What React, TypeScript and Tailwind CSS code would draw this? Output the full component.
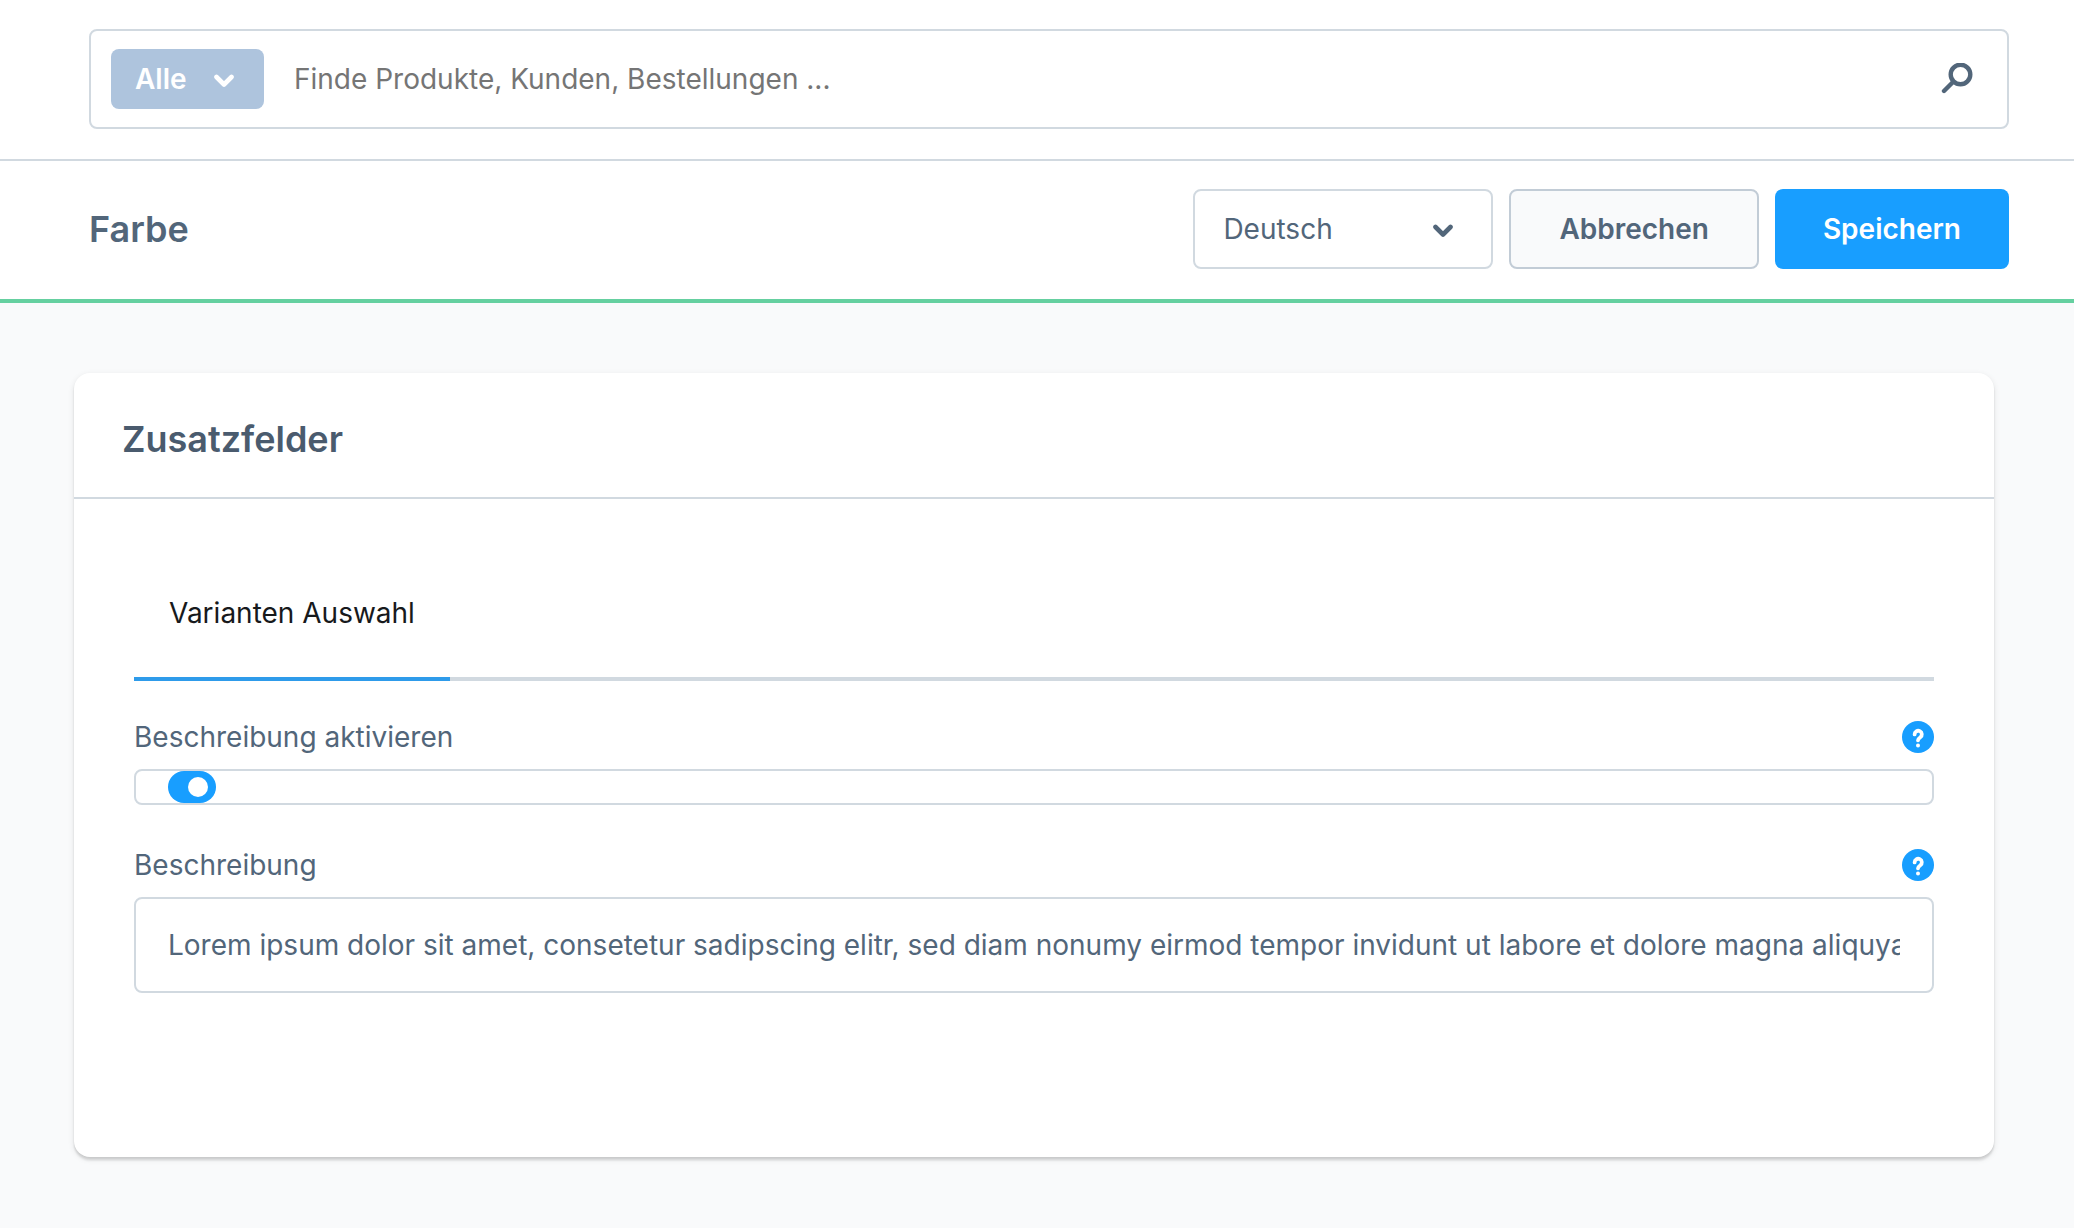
import { useState } from "react"

function ChevronIcon({ className }: { className: string }) {
  return (
    <svg viewBox="0 0 20 14" className={className} fill="none" stroke="currentColor" strokeWidth="4.6" strokeLinecap="round" strokeLinejoin="round" aria-hidden="true">
      <path d="M2.500 3l7.500 7.500L17.500 3" />
    </svg>
  )
}

function HelpButton({ label }: { label: string }) {
  return (
    <button type="button" aria-label={label} className="size-8 rounded-full bg-[#189eff] text-white">
      <svg viewBox="0 0 32 32" className="size-8" fill="none" stroke="currentColor" strokeWidth="3.8" strokeLinecap="round" strokeLinejoin="round">
        <path d="M12.600 13.400a3.600 3.600 0 1 1 5.700 2.900c-1.400 1-2.200 1.500-2.300 3" />
        <circle cx="16" cy="24.400" r="2" fill="currentColor" stroke="none" />
      </svg>
    </button>
  )
}

function SearchBar() {
  return (
    <div className="border-b-2 border-[#d1d9e0] bg-white pt-[29px] pr-[65px] pb-[30px] pl-[89px]">
      <form role="search" className="flex h-[100px] items-center rounded-lg border-2 border-[#d1d9e0] pr-[34px] pl-5">
        <div className="relative text-white">
          <select aria-label="Suchbereich" className="h-[60px] w-[153px] appearance-none rounded-lg bg-[#aec4dd] pl-6 font-semibold">
            <option>Alle</option>
          </select>
          <ChevronIcon className="pointer-events-none absolute top-[25px] right-[30px] h-3.5 w-5" />
        </div>
        <input
          type="search"
          aria-label="Suche"
          placeholder="Finde Produkte, Kunden, Bestellungen ..."
          className="min-w-0 flex-1 px-[30px] text-[#52667a] outline-none placeholder:text-[#757575]"
        />
        <button type="submit" aria-label="Suchen" className="text-[#52667a]">
          <svg viewBox="0 0 32 32" className="size-8" fill="none" stroke="currentColor" strokeWidth="4.400" strokeLinecap="round">
            <circle cx="19.500" cy="11.500" r="9.800" />
            <path d="M12 19l-9 9" />
          </svg>
        </button>
      </form>
    </div>
  )
}

function PageHeader() {
  return (
    <header className="flex items-center justify-between border-b-4 border-[#65d0a0] bg-white pt-7 pr-[65px] pb-[30px] pl-[89px]">
      <h1 className="text-[36px] font-semibold">Farbe</h1>
      <div className="flex gap-4">
        <div className="relative">
          <select aria-label="Sprache" className="h-20 w-[300px] appearance-none rounded-lg border-2 border-[#d1d9e0] bg-white pl-7">
            <option>Deutsch</option>
          </select>
          <ChevronIcon className="pointer-events-none absolute top-[35px] right-[40px] h-3.5 w-5" />
        </div>
        <button type="button" className="h-20 rounded-lg border-2 border-[#c2ccd6] bg-[#f9fafb] px-12 font-semibold">Abbrechen</button>
        <button type="button" className="h-20 rounded-lg bg-[#189eff] px-12 font-semibold text-white">Speichern</button>
      </div>
    </header>
  )
}

function CustomFields() {
  const [active, setActive] = useState(true)
  const [text, setText] = useState(
    "Lorem ipsum dolor sit amet, consetetur sadipscing elitr, sed diam nonumy eirmod tempor invidunt ut labore et dolore magna aliquyam erat, sed diam voluptua."
  )

  return (
    <section className="rounded-2xl bg-white shadow-[0_2px_2px_rgba(0,0,0,0.08),0_4px_2px_rgba(0,0,0,0.06),0_2px_6px_rgba(0,0,0,0.1)]">
      <div className="border-b-2 border-[#d1d9e0] px-12 pt-10 pb-8">
        <h2 className="text-[36px] leading-[52px] font-semibold text-[#4a5b6e]">Zusatzfelder</h2>
      </div>
      <div className="px-[60px] pt-[78px] pb-[164px]">
        <div role="tablist" className="flex border-b-4 border-[#d1d9e0]">
          <button type="button" role="tab" aria-selected="true" className="-mb-1 h-[104px] border-b-4 border-[#2e9bea] px-[35px] pb-7 text-[#17191c]">
            Varianten Auswahl
          </button>
        </div>

        <div className="mt-10 flex h-8 items-center justify-between">
          <label htmlFor="active">Beschreibung aktivieren</label>
          <HelpButton label="Hilfe zu Beschreibung aktivieren" />
        </div>
        <div className="mt-4 rounded-lg border-2 border-[#d1d9e0] px-8">
          <input
            id="active"
            type="checkbox"
            role="switch"
            checked={active}
            onChange={(e) => setActive(e.target.checked)}
            className="flex h-8 w-12 appearance-none items-center rounded-full bg-[#c2ccd6] px-2 before:size-5 before:rounded-full before:bg-white checked:justify-end checked:bg-[#189eff]"
          />
        </div>

        <div className="mt-11 flex h-8 items-center justify-between">
          <label htmlFor="description">Beschreibung</label>
          <HelpButton label="Hilfe zu Beschreibung" />
        </div>
        <input
          id="description"
          type="text"
          value={text}
          onChange={(e) => setText(e.target.value)}
          className="mt-4 h-24 w-full rounded-lg border-2 border-[#d1d9e0] px-8 outline-none"
        />
      </div>
    </section>
  )
}

export default function App() {
  return (
    <div className="min-h-screen bg-[#f9fafb] font-['Inter',sans-serif] text-[28px] leading-9 text-[#52667a]">
      <SearchBar />
      <PageHeader />
      <main className="pt-[70px] pr-20 pb-[70px] pl-[74px]">
        <CustomFields />
      </main>
    </div>
  )
}
